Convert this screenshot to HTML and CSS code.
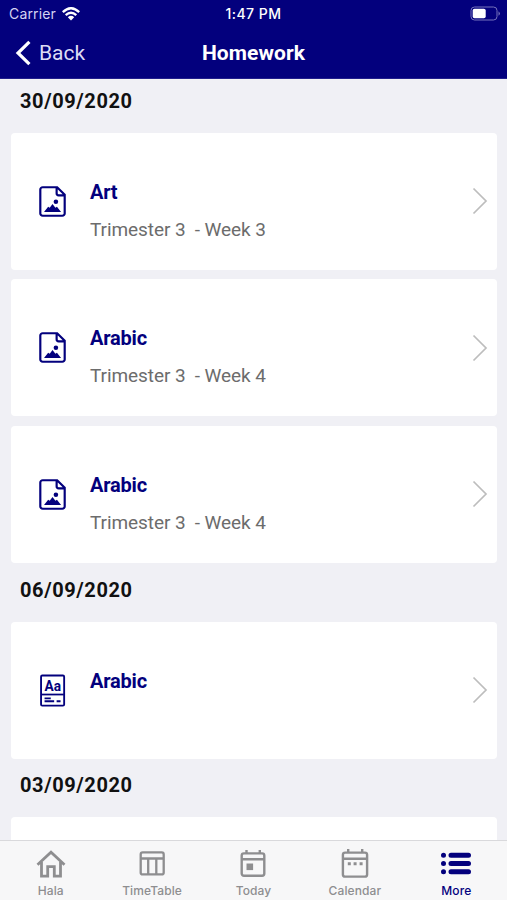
FILE: index.html
```html
<!DOCTYPE html>
<html lang="en">
<head>
    <meta charset="UTF-8">
    <meta name="viewport" content="width=device-width, initial-scale=1.0">
    <title>Homework</title>
    <link rel="stylesheet" href="styles.css">
</head>
<body>
    <!-- shared icons -->
    <svg class="symbols" width="0" height="0">
        <symbol id="picture" viewBox="0 0 26 30">
            <path d="M3.5 1.2H17.5L24.8 8.5V26.5a2.3 2.3 0 0 1-2.3 2.3H3.5a2.3 2.3 0 0 1-2.3-2.3V3.5A2.3 2.3 0 0 1 3.5 1.2M17 1.5V7a2 2 0 0 0 2 2h5.5" fill="none" stroke="currentColor" stroke-width="2.1"/>
            <path d="M4.8 25.2l4-5.2 1.5 1 2.7-3.7 2.8 3.7 1.5-1 4 5.2z" fill="currentColor"/>
            <circle cx="16.3" cy="15.2" r="2.2" fill="currentColor"/>
        </symbol>
        <symbol id="chevron" viewBox="0 0 16 28">
            <path d="M1.5 1.5L14 14 1.5 26.5" fill="none" stroke="#bdbdbd" stroke-width="1.7"/>
        </symbol>
    </svg>

    <header>
        <div class="status">
            <div class="carrier">
                <span>Carrier</span>
                <svg width="18" height="14" viewBox="0 0 18 14" fill="none" stroke="#fff" stroke-width="2.3">
                    <path d="M.8 5.1Q9-2.7 17.2 5.1M3.7 8.2Q9 3.2 14.3 8.2"/>
                    <path d="M5.8 10.2Q9 7.3 12.2 10.2L9 13.4z" fill="#fff" stroke="none"/>
                </svg>
            </div>
            <span class="time">1:47 PM</span>
            <svg class="battery" width="31" height="15" viewBox="0 0 31 15">
                <rect x="1" y="1" width="26" height="13" rx="3.5" fill="none" stroke="#7773bd"/>
                <rect x="2.7" y="2.7" width="13" height="9.6" rx="1.8" fill="#fff"/>
                <path d="M28.5 5.2q2.8 2.3 0 4.6z" fill="#7773bd"/>
            </svg>
        </div>
        <nav>
            <a class="back" href="#">
                <svg width="17" height="26" viewBox="0 0 17 26">
                    <path d="M14.4 1.8L3 13l11.4 11.2" fill="none" stroke="#fff" stroke-width="3.2"/>
                </svg>
                <span>Back</span>
            </a>
            <h1>Homework</h1>
        </nav>
    </header>

    <main>
        <section>
            <h2>30/09/2020</h2>
            <a class="card" href="#">
                <svg class="icon"><use href="#picture"/></svg>
                <div class="info">
                    <h3>Art</h3>
                    <p>Trimester 3&nbsp; - Week 3</p>
                </div>
                <svg class="arrow"><use href="#chevron"/></svg>
            </a>
            <a class="card" href="#">
                <svg class="icon"><use href="#picture"/></svg>
                <div class="info">
                    <h3>Arabic</h3>
                    <p>Trimester 3&nbsp; - Week 4</p>
                </div>
                <svg class="arrow"><use href="#chevron"/></svg>
            </a>
            <a class="card" href="#">
                <svg class="icon"><use href="#picture"/></svg>
                <div class="info">
                    <h3>Arabic</h3>
                    <p>Trimester 3&nbsp; - Week 4</p>
                </div>
                <svg class="arrow"><use href="#chevron"/></svg>
            </a>
        </section>
        <section>
            <h2>06/09/2020</h2>
            <a class="card" href="#">
                <svg class="icon note" viewBox="0 0 26 32">
                    <rect x="1.9" y="1.5" width="22.4" height="29.2" rx="1.2" fill="none" stroke="currentColor" stroke-width="1.8"/>
                    <path d="M2 19.9h22" stroke="currentColor" stroke-width="1.7"/>
                    <text x="13.2" y="16.2" text-anchor="middle" textLength="16" lengthAdjust="spacingAndGlyphs">Aa</text>
                    <path d="M5.3 23.7h6M5.3 26.4h9.3M17 26.4h3.8" stroke="currentColor" stroke-width="1.8"/>
                </svg>
                <div class="info">
                    <h3>Arabic</h3>
                    <p></p>
                </div>
                <svg class="arrow"><use href="#chevron"/></svg>
            </a>
        </section>
        <section>
            <h2>03/09/2020</h2>
            <div class="card"></div>
        </section>
    </main>

    <footer>
        <a href="#">
            <svg width="32" height="30" viewBox="0 0 32 30" fill="none" stroke="currentColor" stroke-width="2.8">
                <path d="M2.5 15.7L16 3.2l13.5 12.5M6.5 13v14.1h6.2v-9.5h6.6v9.5h6.2V13"/>
            </svg>
            <span>Hala</span>
        </a>
        <a href="#">
            <svg width="32" height="30" viewBox="0 0 32 30" fill="none" stroke="currentColor" stroke-width="2.3">
                <rect x="4.7" y="3.4" width="23" height="22" rx="2"/>
                <path d="M5 9.5h22.5M12.2 9.5v16M20.3 9.5v16"/>
            </svg>
            <span>TimeTable</span>
        </a>
        <a href="#">
            <svg width="32" height="30" viewBox="0 0 32 30" fill="none" stroke="currentColor" stroke-width="2.4">
                <rect x="4.7" y="4.4" width="22.6" height="22.4" rx="2.2"/>
                <path d="M5 10.3h22M9.5 1v4M22.8 1v4"/>
                <path d="M9.5 14.5h6.6v6.6H9.5z" fill="currentColor" stroke="none"/>
            </svg>
            <span>Today</span>
        </a>
        <a href="#">
            <svg width="32" height="30" viewBox="0 0 32 30" fill="none" stroke="currentColor" stroke-width="2.4">
                <rect x="3.9" y="3.6" width="24.2" height="24" rx="2.2"/>
                <path d="M4 9.7h24M9.2 0v4M23.2 0v4"/>
                <path d="M8.8 14.7h3M14.6 14.7h3M20.6 14.7h3" stroke-width="3"/>
            </svg>
            <span>Calendar</span>
        </a>
        <a class="active" href="#">
            <svg width="32" height="30" viewBox="0 0 32 30" fill="none" stroke="currentColor" stroke-width="5" stroke-linecap="round">
                <path d="M3.5 6.2h0M3.5 14.6h0M3.5 22.8h0M11 6.2h17.5M11 14.6h17.5M11 22.8h17.5"/>
            </svg>
            <span>More</span>
        </a>
    </footer>
</body>
</html>
```

FILE: styles.css
```css
* {
    box-sizing: border-box;
}

body {
    font-family: Roboto, sans-serif;
    margin: 0;
    height: 900px;
    display: flex;
    flex-direction: column;
    overflow: hidden;
    background-color: #f0f0f5;
    color: #111;
}

h1, h2, h3, p {
    margin: 0;
}

a {
    color: inherit;
    text-decoration: none;
}

.symbols {
    position: absolute;
}

header {
    flex: none;
    height: 79px;
    background-color: #03007d;
    border-bottom: 1px solid #211e8c;
    color: white;
}

.status, nav {
    display: grid;
    grid-template-columns: 1fr auto 1fr;
    align-items: center;
}

.status {
    height: 27px;
    padding: 0 6px 0 9px;
    font-family: Inter, sans-serif;
    font-size: 14px;
}

.carrier {
    display: flex;
    align-items: center;
    gap: 6px;
    color: #d5d3f2;
}

.carrier span {
    letter-spacing: 0.15px;
}

.time {
    margin-left: -3px;
    font-weight: 500;
    font-size: 14px;
    letter-spacing: 0.5px;
}

.battery {
    justify-self: end;
}

nav {
    height: 51px;
    padding: 0 15px;
}

.back {
    display: flex;
    align-items: center;
    gap: 7px;
    font-size: 21px;
    color: #dddcf5;
}

h1 {
    font-size: 21px;
    font-weight: 700;
    letter-spacing: 0.1px;
}

main {
    flex: 1;
    min-height: 0;
    overflow: hidden;
    padding: 0 10px 0 11px;
}

h2 {
    height: 49px;
    padding: 5px 0 0 9px;
    font-size: 20px;
    line-height: 24px;
    font-weight: 700;
    letter-spacing: 0.6px;
}

section {
    padding-top: 0.1px;
    margin-bottom: 9.2px;
}

section:first-child h2 {
    height: 53.7px;
    padding-top: 10px;
}

.card {
    display: flex;
    align-items: center;
    height: 137px;
    margin-bottom: 9.6px;
    padding: 0 9px 0 28px;
    border-radius: 4px;
    background-color: white;
}

.icon {
    width: 27px;
    height: 31px;
    color: #03007d;
}

.note {
    height: 33px;
}

.note text {
    font: 700 14.5px Roboto, sans-serif;
    fill: currentColor;
}

.info {
    flex: 1;
    padding: 19px 0 0 24px;
}

h3 {
    font-size: 20px;
    line-height: 26px;
    font-weight: 700;
    letter-spacing: -0.2px;
    color: #03007d;
}

p {
    height: 26px;
    margin-top: 12px;
    font-size: 19px;
    line-height: 26px;
    font-weight: 400;
    letter-spacing: -0.08px;
    color: #6c6c6c;
}

.arrow {
    width: 16px;
    height: 28px;
}

footer {
    flex: none;
    display: grid;
    grid-template-columns: repeat(5, 1fr);
    height: 60px;
    border-top: 1px solid #d9d9dc;
    background-color: #f7f7f8;
    color: #8e8e90;
    font-family: Inter, sans-serif;
    font-size: 12px;
    font-weight: 500;
}

footer a {
    display: flex;
    flex-direction: column;
    align-items: center;
    padding-top: 8px;
}

footer span {
    margin-top: 4px;
    line-height: 15px;
    letter-spacing: 0.1px;
}

.active {
    color: #03007d;
}
```
